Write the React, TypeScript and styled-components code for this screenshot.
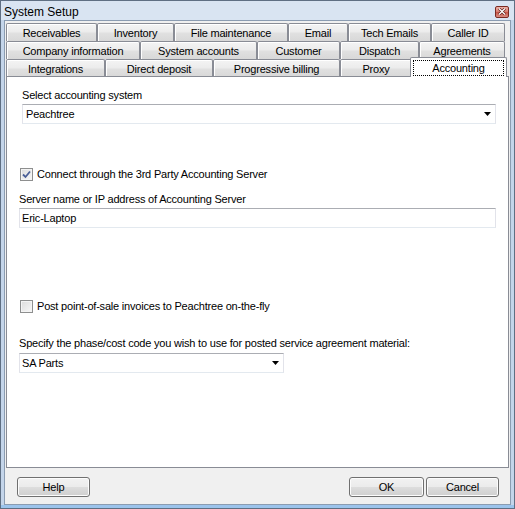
import styled, { createGlobalStyle, css } from 'styled-components';

const GlobalStyles = createGlobalStyle`
  html, body {
    margin: 0;
    padding: 0;
    background: #ffffff;
  }
  body {
    font-family: "Liberation Sans", Arial, sans-serif;
    font-size: 11px;
    letter-spacing: -0.2px;
    color: #000000;
  }
  * {
    box-sizing: border-box;
  }
`;

const Window = styled.div`
  width: 515px;
  height: 509px;
  display: flex;
  flex-direction: column;
  background: #c4d5ea;
  border: 1px solid #5f6f83;
  padding: 0 3px 3px 3px;
  box-shadow: inset 0 -3px 0 #9cc4ec;
`;

const TitleBar = styled.div`
  height: 19px;
  margin: 0 -3px;
  padding: 2px 5px 0 3px;
  display: flex;
  align-items: center;
  justify-content: space-between;
  background: #d9e4f2;
`;

const Title = styled.span`
  font-size: 12px;
  letter-spacing: 0;
  color: #000;
`;

const CloseBox = styled.div`
  width: 14px;
  height: 12px;
  border: 1px solid #7a2a22;
  border-radius: 2px;
  background: linear-gradient(#eeb2a8, #d7786c 50%, #c45244 51%, #d98b80);
  display: flex;
  align-items: center;
  justify-content: center;
`;

const Client = styled.div`
  flex: 1;
  display: flex;
  flex-direction: column;
  background: #f0f0f0;
  border: 1px solid #8b9cb1;
  padding: 2px 1px 0 1px;
`;

const TabStrip = styled.div`
  display: flex;
  flex-direction: column;
`;

const TabRow = styled.div`
  display: flex;
  height: 18px;
`;

const Tab = styled.div<{ $w: number; $active?: boolean }>`
  flex: none;
  width: ${p => p.$w}px;
  height: 18px;
  display: flex;
  align-items: center;
  justify-content: center;
  border: 1px solid #898c95;
  border-bottom: none;
  border-radius: 2px 2px 0 0;
  background: linear-gradient(#f4f4f4, #ececec 45%, #e0e0e0 55%, #d8d8d8);
  box-shadow: inset 1px 1px 0 #ffffff;
  white-space: nowrap;
  padding-top: 1px;

  ${p =>
    p.$active &&
    css`
      position: relative;
      z-index: 2;
      width: ${p.$w + 4}px;
      height: 20px;
      margin: -2px -2px 0 -2px;
      background: #ffffff;
      box-shadow: none;
      padding: 2px 2px 1px 2px;
      align-items: stretch;
    `}
`;

const FocusRect = styled.span`
  flex: 1;
  display: flex;
  align-items: center;
  justify-content: center;
  border: 1px dotted #000000;
`;

const Panel = styled.div`
  flex: 1;
  margin-top: -1px;
  background: #ffffff;
  border: 1px solid #898c95;
  padding: 12px 12px 0 12px;
  display: flex;
  flex-direction: column;
  align-items: stretch;
`;

const Group = styled.div<{ $indent?: number; $top?: number }>`
  display: flex;
  flex-direction: column;
  margin-left: ${p => p.$indent ?? 0}px;
  margin-top: ${p => p.$top ?? 0}px;
`;

const Label = styled.div`
  line-height: 13px;
  height: 13px;
  white-space: nowrap;
`;

const Field = styled.div<{ $w?: number; $gap?: number }>`
  height: 20px;
  width: ${p => (p.$w ? `${p.$w}px` : 'auto')};
  margin-top: ${p => p.$gap ?? 2}px;
  display: flex;
  align-items: center;
  justify-content: space-between;
  padding: 0 4px 0 2px;
  background: #ffffff;
  border: 1px solid #e2e3ea;
  border-top-color: #abadb3;
  border-bottom-color: #e3e9ef;
`;

const CheckRow = styled.label<{ $top: number }>`
  display: flex;
  align-items: center;
  gap: 4px;
  height: 13px;
  margin-top: ${p => p.$top}px;
  margin-left: 1px;
  line-height: 13px;
`;

const Box = styled.span`
  width: 13px;
  height: 13px;
  flex: none;
  border: 1px solid #8e8f8f;
  background: linear-gradient(135deg, #dcdcdc, #f8f8f8);
  box-shadow: inset 0 0 0 1px #f4f4f4;
  display: flex;
  align-items: center;
  justify-content: center;
`;

const Footer = styled.div`
  height: 36px;
  flex: none;
  display: flex;
  align-items: flex-start;
  gap: 2px;
  padding: 9px 10px 0 11px;
`;

const Spacer = styled.div`
  flex: 1;
`;

const Button = styled.button<{ $w: number }>`
  width: ${p => p.$w}px;
  height: 20px;
  padding: 0;
  font-family: "Liberation Sans", Arial, sans-serif;
  font-size: 11px;
  letter-spacing: -0.2px;
  color: #000;
  border: 1px solid #707070;
  border-radius: 3px;
  background: linear-gradient(#f2f2f2, #ebebeb 50%, #dddddd 51%, #cfcfcf);
  box-shadow: inset 0 0 0 1px #fcfcfc;
`;

type TabDef = { label: string; width: number; active?: boolean };

const tabRows: TabDef[][] = [
  [
    { label: 'Receivables', width: 91 },
    { label: 'Inventory', width: 77 },
    { label: 'File maintenance', width: 114 },
    { label: 'Email', width: 60 },
    { label: 'Tech Emails', width: 83 },
    { label: 'Caller ID', width: 74 },
  ],
  [
    { label: 'Company information', width: 134 },
    { label: 'System accounts', width: 117 },
    { label: 'Customer', width: 83 },
    { label: 'Dispatch', width: 79 },
    { label: 'Agreements', width: 86 },
  ],
  [
    { label: 'Integrations', width: 99 },
    { label: 'Direct deposit', width: 108 },
    { label: 'Progressive billing', width: 127 },
    { label: 'Proxy', width: 72 },
    { label: 'Accounting', width: 93, active: true },
  ],
];

function DropArrow() {
  return (
    <svg width="7" height="4" viewBox="0 0 7 4">
      <polygon points="0,0 7,0 3.5,4" fill="#000" />
    </svg>
  );
}

function CheckMark() {
  return (
    <svg width="9" height="9" viewBox="0 0 9 9">
      <path d="M1 4.5 L3.5 7 L8 1.5" fill="none" stroke="#4a5f97" strokeWidth="1.8" />
    </svg>
  );
}

function CloseGlyph() {
  return (
    <svg width="8" height="7" viewBox="0 0 8 7">
      <path d="M1 0.5 L7 6.5 M7 0.5 L1 6.5" stroke="#5a1a14" strokeWidth="2.6" />
      <path d="M1 0.5 L7 6.5 M7 0.5 L1 6.5" stroke="#ffffff" strokeWidth="1.4" />
    </svg>
  );
}

function App() {
  return (
    <>
      <GlobalStyles />
      <Window>
        <TitleBar>
          <Title>System Setup</Title>
          <CloseBox>
            <CloseGlyph />
          </CloseBox>
        </TitleBar>
        <Client>
          <TabStrip>
            {tabRows.map((row, i) => (
              <TabRow key={i}>
                {row.map(tab => (
                  <Tab key={tab.label} $w={tab.width} $active={tab.active}>
                    {tab.active ? <FocusRect>{tab.label}</FocusRect> : tab.label}
                  </Tab>
                ))}
              </TabRow>
            ))}
          </TabStrip>
          <Panel>
            <Group $indent={3}>
              <Label>Select accounting system</Label>
              <Field>
                <span style={{ paddingLeft: 1 }}>Peachtree</span>
                <DropArrow />
              </Field>
            </Group>

            <CheckRow $top={44}>
              <Box>
                <CheckMark />
              </Box>
              Connect through the 3rd Party Accounting Server
            </CheckRow>

            <Group $top={12}>
              <Label>Server name or IP address of Accounting Server</Label>
              <Field>
                <span>Eric-Laptop</span>
              </Field>
            </Group>

            <CheckRow $top={72}>
              <Box />
              Post point-of-sale invoices to Peachtree on-the-fly
            </CheckRow>

            <Group $top={24}>
              <Label>Specify the phase/cost code you wish to use for posted service agreement material:</Label>
              <Field $w={265} $gap={3}>
                <span>SA Parts</span>
                <DropArrow />
              </Field>
            </Group>
          </Panel>
          <Footer>
            <Button $w={73}>Help</Button>
            <Spacer />
            <Button $w={75}>OK</Button>
            <Button $w={73}>Cancel</Button>
          </Footer>
        </Client>
      </Window>
    </>
  );
}

export default App;
